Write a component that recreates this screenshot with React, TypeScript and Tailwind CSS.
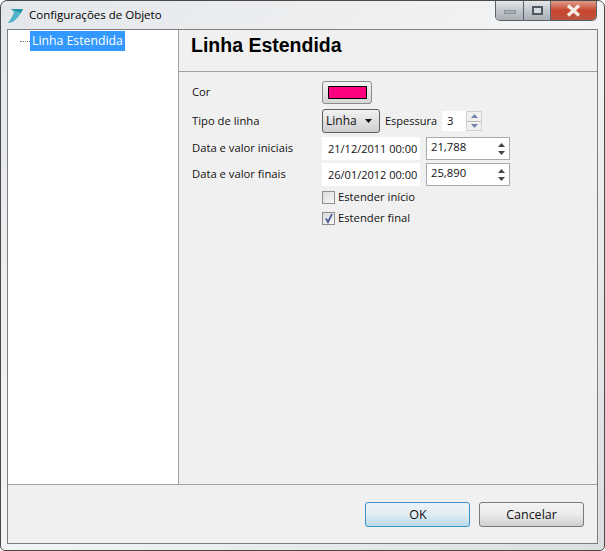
function Spin() {
  return (
    <div className="flex flex-col items-center justify-center w-[15px] h-[20px] gap-[4px]">
      <svg width="7" height="4" viewBox="0 0 7 4"><path d="M3.5 0 L7 4 L0 4 Z" fill="#444" /></svg>
      <svg width="7" height="4" viewBox="0 0 7 4"><path d="M3.5 4 L7 0 L0 0 Z" fill="#444" /></svg>
    </div>
  );
}
function Row({ label, children, h, lift }: { label: string; children: React.ReactNode; h: string; lift?: boolean }) {
  return (
    <div className={`flex items-center ${h}`}>
      <div className={lift ? 'w-[130px] shrink-0 -mt-[2px]' : 'w-[130px] shrink-0'}>{label}</div>
      {children}
    </div>
  );
}
function DateValue({ date, value }: { date: string; value: string }) {
  return (
    <div className="flex items-center gap-[6px]">
      <div className="w-[98px] h-[23px] bg-white flex items-center pl-[6px] whitespace-nowrap text-[11px]">{date}</div>
      <div className="w-[84px] h-[23px] bg-white border border-[#a9a9a9] flex items-center justify-between pl-[4px]">
        <span className="-mt-[3px]">{value}</span>
        <Spin />
      </div>
    </div>
  );
}
function Check({ checked, label }: { checked?: boolean; label: string }) {
  return (
    <div className="flex items-center gap-[3px] h-[20px]">
      <div className="w-[13px] h-[13px] border border-[#8e8e8e] bg-gradient-to-br from-[#dcdcdc] to-[#f8f8f8] flex items-center justify-center">
        {checked && (
          <svg width="10" height="11" viewBox="0 0 10 11"><path d="M2 5.5 L4 9 L8 1" fill="none" stroke="#4a5f97" strokeWidth="1.8" /></svg>
        )}
      </div>
      <span>{label}</span>
    </div>
  );
}
export default function App() {
  return (
    <div className="w-[605px] h-[551px] bg-gradient-to-br from-[#e4e7ea] via-[#f3f4f5] to-[#dcdfe2] border border-[#4a4a4a] rounded-t-[7px] rounded-b-[5px] flex flex-col text-[11.25px] leading-[16px] text-[#111] overflow-hidden font-['Open_Sans','Noto_Sans',sans-serif]">
      <div className="h-[28px] shrink-0 flex items-start pl-[6px] pr-[7px]">
        <svg className="mt-[6px]" width="17" height="17" viewBox="0 0 17 17">
          <path d="M4 2 H16 C14 6 11 11 7 14 C5 15.5 3 16 1 16 C4 12 6 8 7 5 Z" fill="#4fb4c8" />
          <path d="M4 2 H16 L14 6 C12 4.5 8 4 4 2 Z" fill="#2391a8" />
        </svg>
        <div className="ml-[5px] mt-[6px] text-[11.5px] text-[#000]">Configurações de Objeto</div>
        <div className="ml-auto flex h-[20px] w-[102px] border border-t-0 border-[#59626c] rounded-b-[5px] overflow-hidden">
          <div className="w-[28px] bg-gradient-to-b from-[#e4e7ea] via-[#c3c8cd] to-[#a9aeb4] flex items-center justify-center border-r border-[#59626c]">
            <div className="w-[12px] h-[4px] bg-[#a9afb6] border border-[#8d939a] mt-[3px]" />
          </div>
          <div className="w-[27px] bg-gradient-to-b from-[#e4e7ea] via-[#c3c8cd] to-[#a9aeb4] flex items-center justify-center border-r border-[#59626c]">
            <div className="w-[11px] h-[9px] border-2 border-[#4f5861] bg-[#d6d9dd]" />
          </div>
          <div className="flex-1 bg-gradient-to-b from-[#dc9a88] via-[#c9452e] to-[#b9543e] flex items-center justify-center">
            <svg width="15" height="13" viewBox="0 0 15 13"><path d="M2 1.5 L13 11.5 M13 1.5 L2 11.5" stroke="#f3ebe4" strokeWidth="3.4" /></svg>
          </div>
        </div>
      </div>
      <div className="mx-[6px] mb-[6px] flex-1 flex flex-col bg-[#f0f0f0] border border-[#7e7e7e]">
        <div className="flex-1 flex border-b border-[#a0a0a0] min-h-0">
          <div className="w-[171px] shrink-0 bg-white border-r border-[#a0a0a0] pt-[1px] pl-[12px] flex items-start">
            <div className="mt-[10px] w-[10px] border-t border-dotted border-[#777]" />
            <div className="bg-[#3399ff] text-white h-[20px] px-[2px] flex items-center whitespace-nowrap text-[12.25px]">Linha Estendida</div>
          </div>
          <div className="flex-1 flex flex-col">
            <div className="h-[42px] shrink-0 border-b border-[#a0a0a0] pl-[12px] pt-[3px] font-['Liberation_Sans',sans-serif] font-bold text-[19.5px] leading-[24px] text-black">Linha Estendida</div>
            <div className="pl-[13px] pt-[8px] flex flex-col">
              <Row label="Cor" h="h-[24px]">
                <div className="w-[50px] h-[23px] rounded-[3px] border border-[#8a8a8a] bg-gradient-to-b from-[#f4f4f4] to-[#d6d6d6] flex items-center justify-center">
                  <div className="w-[39px] h-[13px] bg-[#ff0080] border border-black" />
                </div>
              </Row>
              <Row label="Tipo de linha" h="h-[24px] mt-[5px]">
                <div className="w-[58px] h-[24px] rounded-[3px] border border-[#5e5e5e] bg-gradient-to-b from-[#f2f2f2] to-[#cfcfcf] flex items-center justify-between pl-[3px] pr-[7px] text-[12px]">
                  <span>Linha</span>
                  <svg width="7" height="4" viewBox="0 0 7 4"><path d="M0 0 H7 L3.5 4 Z" fill="#111" /></svg>
                </div>
                <span className="ml-[5px] text-[11px]">Espessura</span>
                <div className="ml-[5px] h-[20px] w-[40px] bg-white flex items-center justify-between pl-[5px]">
                  <span>3</span>
                  <div className="w-[16px] h-[20px] flex flex-col bg-[#f0f0f0] border border-[#d0d0d0]">
                    <div className="flex-1 flex items-center justify-center border-b border-[#bbb]"><svg width="7" height="4" viewBox="0 0 7 4"><path d="M3.5 0 L7 4 L0 4 Z" fill="#7283ad" /></svg></div>
                    <div className="flex-1 flex items-center justify-center"><svg width="7" height="4" viewBox="0 0 7 4"><path d="M3.5 4 L7 0 L0 0 Z" fill="#7283ad" /></svg></div>
                  </div>
                </div>
              </Row>
              <Row label="Data e valor iniciais" h="h-[23px] mt-[4px]" lift>
                <DateValue date="21/12/2011 00:00" value="21,788" />
              </Row>
              <Row label="Data e valor finais" h="h-[23px] mt-[3px]" lift>
                <DateValue date="26/01/2012 00:00" value="25,890" />
              </Row>
              <div className="pl-[130px] mt-[1px] flex flex-col gap-[1px]">
                <Check label="Estender início" />
                <Check checked label="Estender final" />
              </div>
            </div>
          </div>
        </div>
        <div className="h-[58px] shrink-0 flex items-start justify-end gap-[9px] pt-[17px] pr-[13px]">
          <button className="w-[105px] h-[25px] pt-[1px] pl-[1px] rounded-[3px] border border-[#3c93c9] bg-gradient-to-b from-[#edf4f8] via-[#e0edf4] to-[#bcd9e9] text-[#111] text-[12.5px]">OK</button>
          <button className="w-[105px] h-[25px] pt-[1px] rounded-[3px] border border-[#7a7a7a] bg-gradient-to-b from-[#f3f3f3] via-[#ebebeb] to-[#cfcfcf] text-[#111] text-[12.5px]">Cancelar</button>
        </div>
      </div>
    </div>
  );
}
